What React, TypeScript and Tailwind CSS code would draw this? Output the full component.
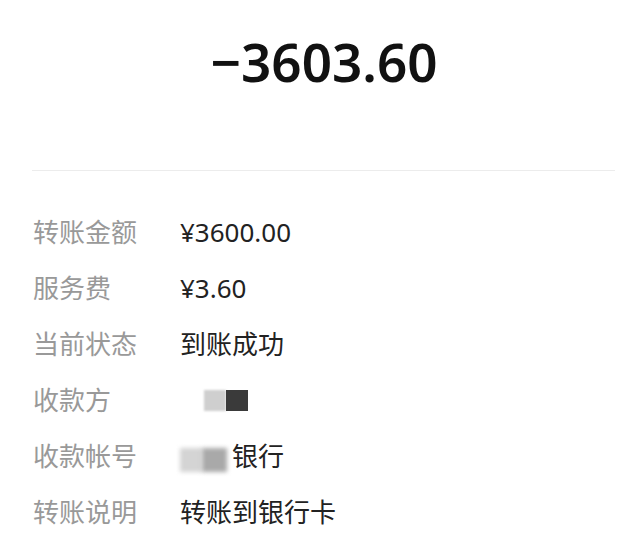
import React from 'react';

const rows: { label: string; value: React.ReactNode }[] = [
  { label: '转账金额', value: '¥3600.00' },
  { label: '服务费', value: '¥3.60' },
  { label: '当前状态', value: '到账成功' },
  {
    label: '收款方',
    value: (
      <span className="flex items-center pl-[24px]">
        <span className="h-[21px] w-[22px] bg-[#cfcfcf] blur-[1px]" />
        <span className="h-[21px] w-[22px] bg-[#3a3a3a] blur-[0.5px]" />
      </span>
    ),
  },
  {
    label: '收款帐号',
    value: (
      <span className="flex items-center">
        <span className="mt-[8px] h-[24px] w-[22px] bg-[#d4d4d4] blur-[2px]" />
        <span className="mt-[8px] h-[24px] w-[25px] bg-[#a9a9a9] blur-[2px]" />
        <span className="ml-[5px]">银行</span>
      </span>
    ),
  },
  { label: '转账说明', value: '转账到银行卡' },
];

export default function App() {
  return (
    <div
      className="w-[640px] h-[537px] overflow-hidden bg-white"
      style={{ fontFamily: '"Noto Sans", "Noto Sans CJK SC", sans-serif' }}
    >
      {/* Amount */}
      <div className="flex h-[120px] items-center justify-center pl-[8px] pt-[2px]">
        <span className="text-[53px] font-semibold leading-none text-[#111]">
          −3603.60
        </span>
      </div>

      {/* Divider */}
      <div className="ml-[32px] mr-[25px] mt-[50px] h-px bg-[#ececec]" />

      {/* Details */}
      <div className="mt-[33px] px-[33px]">
        {rows.map((r) => (
          <div key={r.label} className="flex h-[56px] items-center text-[26px]">
            <span className="w-[147px] shrink-0 text-[#999]">{r.label}</span>
            <span className="flex items-center text-[#222]">{r.value}</span>
          </div>
        ))}
      </div>
    </div>
  );
}
